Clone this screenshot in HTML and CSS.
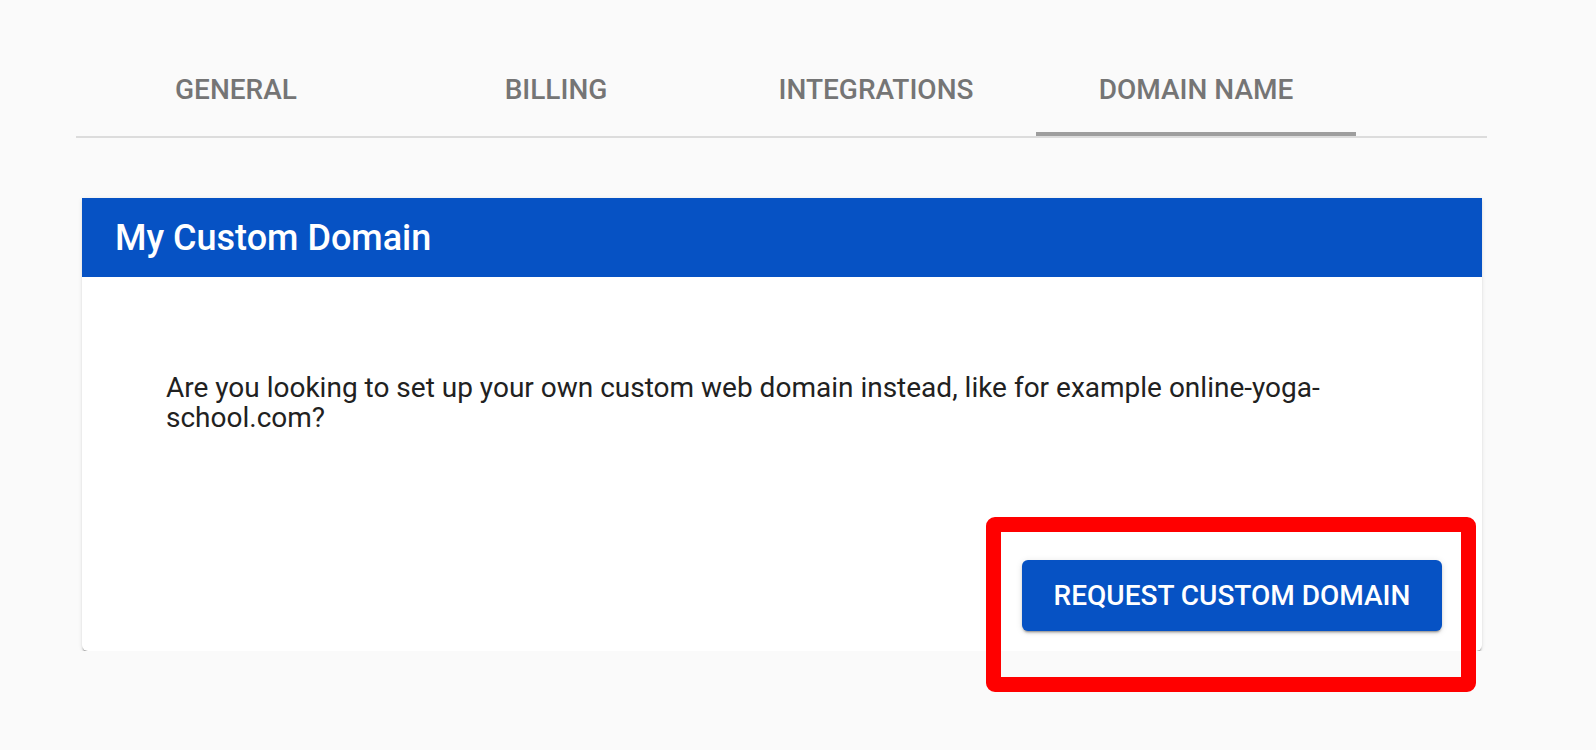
FILE: index.html
```html
<!DOCTYPE html>
<html>
<head>
<meta charset="utf-8">
<link rel="stylesheet" href="styles.css">
</head>
<body>
<div class="page">
  <nav class="tabs">
    <div class="tab">GENERAL</div>
    <div class="tab">BILLING</div>
    <div class="tab">INTEGRATIONS</div>
    <div class="tab active">DOMAIN NAME</div>
  </nav>
  <section class="card">
    <header class="card-title">My Custom Domain</header>
    <div class="card-text">Are you looking to set up your own custom web domain instead, like for example online-yoga-school.com?</div>
    <div class="card-actions">
      <button class="btn">REQUEST CUSTOM DOMAIN</button>
    </div>
  </section>
</div>
<div class="highlight"></div>
</body>
</html>
```

FILE: styles.css
```css
html, body {
  margin: 0;
  padding: 0;
  background: #fafafa;
  font-family: Roboto, "Noto Sans", sans-serif;
}
.page {
  padding: 40px 0 0 76px;
  width: 1411px;
}
.tabs {
  display: flex;
  height: 98px;
  border-bottom: 2px solid #dcdcdc;
  box-sizing: border-box;
}
.tab {
  width: 320px;
  height: 96px;
  display: flex;
  align-items: center;
  justify-content: center;
  font-size: 28px;
  font-weight: 500;
  color: #757575;
  padding-top: 2px;
  box-sizing: border-box;
}
.tab.active {
  border-bottom: 4px solid #9e9e9e;
  padding-top: 6px;
}
.card {
  margin: 60px 0 0 6px;
  width: 1400px;
  background: #fff;
  border-radius: 0 0 6px 6px;
  box-shadow: 0 3px 2px -1px rgba(0,0,0,.35), 0 1px 4px rgba(0,0,0,.1);
}
.card-title {
  background: #0652c4;
  color: #fff;
  height: 79px;
  display: flex;
  align-items: center;
  padding-left: 33px;
  font-size: 36px;
  font-weight: 500;
}
.card-text {
  padding: 96px 84px 0;
  font-size: 28px;
  line-height: 30px;
  color: #212121;
}
.card-actions {
  display: flex;
  justify-content: flex-end;
  padding: 127px 40px 20px;
}
.btn {
  width: 420px;
  height: 71px;
  border: none;
  border-radius: 6px;
  background: #0652c4;
  color: #fff;
  font-family: Roboto, sans-serif;
  font-size: 28px;
  font-weight: 500;
  box-shadow: 0 3px 2px -2px rgba(0,0,0,.3), 0 2px 3px rgba(0,0,0,.15), 0 1px 7px rgba(0,0,0,.1);
}
.highlight {
  position: absolute;
  left: 986px;
  top: 517px;
  width: 490px;
  height: 175px;
  box-sizing: border-box;
  border: 15px solid #ff0000;
  border-radius: 9px;
}
```
